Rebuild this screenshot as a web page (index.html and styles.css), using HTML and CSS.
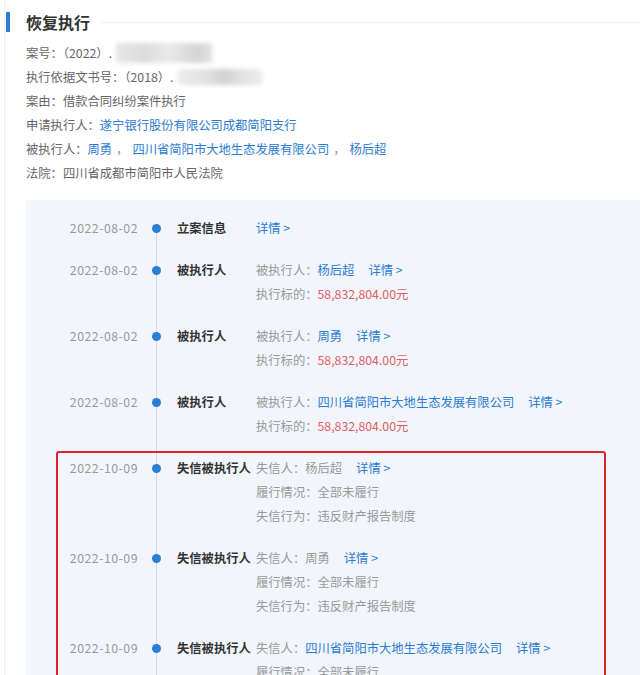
FILE: index.html
```html
<!DOCTYPE html>
<html lang="zh-CN">
<head>
    <meta charset="UTF-8">
    <meta name="viewport" content="width=device-width, initial-scale=1.0">
    <title>恢复执行</title>
    <link rel="stylesheet" href="styles.css">
</head>
<body>
    <div class="page">
        <div class="section-title">
            <span class="title-bar"></span>
            <h2>恢复执行</h2>
            <span class="title-line"></span>
        </div>

        <div class="case-info">
            <p>案号：（2022）.<span class="blur blur-case"></span></p>
            <p>执行依据文书号：（2018）.<span class="blur blur-doc"></span></p>
            <p>案由：借款合同纠纷案件执行</p>
            <p>申请执行人：<a href="#">遂宁银行股份有限公司成都简阳支行</a></p>
            <p>被执行人：<a href="#">周勇</a><span class="sep">，</span><a href="#">四川省简阳市大地生态发展有限公司</a><span class="sep">，</span><a href="#">杨后超</a></p>
            <p>法院：四川省成都市简阳市人民法院</p>
        </div>

        <div class="timeline">
            <div class="tl-row">
                <div class="tl-date">2022-08-02</div>
                <div class="tl-dot"><span></span></div>
                <div class="tl-label">立案信息</div>
                <div class="tl-content">
                    <p><a href="#" class="more more-only">详情 &gt;</a></p>
                </div>
            </div>

            <div class="tl-row">
                <div class="tl-date">2022-08-02</div>
                <div class="tl-dot"><span></span></div>
                <div class="tl-label">被执行人</div>
                <div class="tl-content">
                    <p>被执行人：<a href="#">杨后超</a><a href="#" class="more">详情 &gt;</a></p>
                    <p>执行标的：<span class="amount">58,832,804.00元</span></p>
                </div>
            </div>

            <div class="tl-row">
                <div class="tl-date">2022-08-02</div>
                <div class="tl-dot"><span></span></div>
                <div class="tl-label">被执行人</div>
                <div class="tl-content">
                    <p>被执行人：<a href="#">周勇</a><a href="#" class="more">详情 &gt;</a></p>
                    <p>执行标的：<span class="amount">58,832,804.00元</span></p>
                </div>
            </div>

            <div class="tl-row">
                <div class="tl-date">2022-08-02</div>
                <div class="tl-dot"><span></span></div>
                <div class="tl-label">被执行人</div>
                <div class="tl-content">
                    <p>被执行人：<a href="#">四川省简阳市大地生态发展有限公司</a><a href="#" class="more">详情 &gt;</a></p>
                    <p>执行标的：<span class="amount">58,832,804.00元</span></p>
                </div>
            </div>

            <div class="highlight">
                <div class="tl-row">
                    <div class="tl-date">2022-10-09</div>
                    <div class="tl-dot"><span></span></div>
                    <div class="tl-label">失信被执行人</div>
                    <div class="tl-content">
                        <p>失信人：杨后超<a href="#" class="more">详情 &gt;</a></p>
                        <p>履行情况：全部未履行</p>
                        <p>失信行为：违反财产报告制度</p>
                    </div>
                </div>

                <div class="tl-row">
                    <div class="tl-date">2022-10-09</div>
                    <div class="tl-dot"><span></span></div>
                    <div class="tl-label">失信被执行人</div>
                    <div class="tl-content">
                        <p>失信人：周勇<a href="#" class="more">详情 &gt;</a></p>
                        <p>履行情况：全部未履行</p>
                        <p>失信行为：违反财产报告制度</p>
                    </div>
                </div>

                <div class="tl-row">
                    <div class="tl-date">2022-10-09</div>
                    <div class="tl-dot"><span></span></div>
                    <div class="tl-label">失信被执行人</div>
                    <div class="tl-content">
                        <p>失信人：<a href="#">四川省简阳市大地生态发展有限公司</a><a href="#" class="more">详情 &gt;</a></p>
                        <p>履行情况：全部未履行</p>
                        <p>失信行为：违反财产报告制度</p>
                    </div>
                </div>
            </div>
        </div>
    </div>
</body>
</html>
```

FILE: styles.css
```css
html, body {
    margin: 0;
    padding: 0;
    overflow: hidden;
    background-color: #fff;
}

body {
    font-family: "Noto Sans CJK SC", "Noto Sans", sans-serif;
    font-size: 12.3px;
    color: #666;
}

p {
    margin: 0;
}

a {
    color: #2b7bd2;
    text-decoration: none;
}

.page {
    margin-left: 4px;
    padding: 12px 0 0 1px;
    border-left: 1px solid #f0f0f0;
    min-height: 800px;
}

/* title */
.section-title {
    display: flex;
    align-items: center;
    height: 20px;
}

.title-bar {
    width: 4px;
    height: 20px;
    background-color: #2a7fd4;
}

.section-title h2 {
    margin: 0 0 0 16px;
    font-size: 16px;
    line-height: 20px;
    font-weight: bold;
    color: #333;
}

.title-line {
    flex: 1;
    height: 1px;
    margin-left: 11px;
    background-color: #f0f0f0;
}

/* case info */
.case-info {
    padding: 9px 0 0 20px;
    line-height: 24px;
}

.case-info p {
    display: flex;
    align-items: center;
}

.sep {
    margin: 0 4px;
    color: #999;
}

.blur {
    display: inline-block;
    height: 20px;
    filter: blur(2px);
}

.blur-case {
    width: 96px;
    margin-left: 4px;
    background: linear-gradient(90deg, #e6e6e6 0%, #dcdcdc 30%, #e9e9e9 55%, #d4d4d4 85%, #e2e2e2 100%);
}

.blur-doc {
    width: 84px;
    height: 16px;
    margin-left: 4px;
    background: linear-gradient(90deg, #ececec 0%, #e0e0e0 35%, #d2d2d2 55%, #e4e4e4 80%, #ebebeb 100%);
}

/* timeline */
.timeline {
    position: relative;
    margin: 15px 0 0 20px;
    padding-top: 16px;
    background-color: #f2f6fc;
}

.timeline::before {
    content: "";
    position: absolute;
    left: 130px;
    top: 28px;
    bottom: 0;
    width: 1px;
    background-color: #d3d8de;
}

.tl-row {
    display: grid;
    grid-template-columns: 112px 39px 79px 1fr;
    line-height: 24px;
    padding-bottom: 18px;
}

.tl-date {
    text-align: right;
    letter-spacing: 0.5px;
    color: #999;
}

.tl-dot {
    position: relative;
    z-index: 1;
}

.tl-dot span {
    display: block;
    width: 9px;
    height: 9px;
    margin: 8px 0 0 14px;
    border-radius: 50%;
    background-color: #2a7fd4;
}

.tl-label {
    font-weight: bold;
    color: #333;
    white-space: nowrap;
}

.tl-content {
    color: #999;
}

.tl-content .more {
    margin-left: 14px;
}

.tl-content .more-only {
    margin-left: 0;
}

.amount {
    color: #e25d5d;
}

/* red box around the dishonest debtor entries */
.highlight {
    position: relative;
}

.highlight::after {
    content: "";
    position: absolute;
    top: -5px;
    left: 30px;
    right: 34px;
    bottom: 0;
    border: 2px solid #d9262b;
    border-radius: 3px;
}
```
